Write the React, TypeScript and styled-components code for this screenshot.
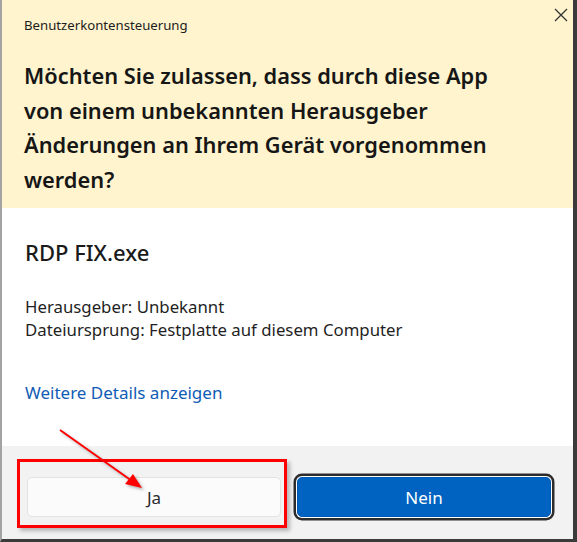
import styled, { createGlobalStyle } from "styled-components";

const GlobalStyle = createGlobalStyle`
  html, body {
    margin: 0;
    padding: 0;
    background: #3a3a3a;
  }
  body {
    font-family: "Noto Sans", "Open Sans", sans-serif;
  }
`;

// Window frame
const Dialog = styled.div`
  position: relative;
  width: 571px;
  height: 539px;
  border-left: 2px solid #a3a3a3;
  border-right: 4px solid #3a3a3a;
  border-bottom: 3px solid #3a3a3a;
  display: flex;
  flex-direction: column;
  overflow: hidden;
`;

const Header = styled.div`
  background: #fff4ce;
  padding: 14px 22px 0 22px;
  height: 194px;
`;

const TitleRow = styled.div`
  display: flex;
  justify-content: space-between;
  align-items: flex-start;
`;

const Title = styled.span`
  font-size: 13.2px;
  line-height: 22px;
  color: #1c1c1c;
`;

const CloseButton = styled.button`
  border: none;
  background: transparent;
  padding: 0;
  margin: -11px -22px 0 0;
  width: 24px;
  height: 24px;
  display: flex;
  align-items: center;
  justify-content: center;
  cursor: pointer;
`;

const Question = styled.h1`
  margin: 23px 0 0 0;
  font-size: 21.8px;
  font-weight: 600;
  line-height: 34.7px;
  color: #161616;
  max-width: 500px;
`;

const Body = styled.div`
  background: #ffffff;
  padding: 30px 23px 0 23px;
  height: 208px;
`;

const AppName = styled.div`
  font-size: 22px;
  line-height: 28px;
  font-weight: 500;
  color: #1a1a1a;
`;

const Details = styled.div`
  margin-top: 29px;
  font-size: 16.8px;
  line-height: 23px;
  color: #1f1f1f;
`;

const MoreLink = styled.a`
  display: block;
  margin-top: 40px;
  font-size: 17px;
  line-height: 23px;
  color: #0f5cb5;
  text-decoration: none;
  cursor: pointer;
`;

const Footer = styled.div`
  flex: 1;
  background: #f2f2f2;
  padding: 31px 22px 0 25px;
  display: flex;
  gap: 16px;
`;

const ActionButton = styled.button<{ $primary?: boolean }>`
  flex: 1;
  height: 40px;
  border-radius: 5px;
  font-family: inherit;
  font-size: 17px;
  cursor: pointer;
  border: 1px solid ${({ $primary }) => ($primary ? "#0059b0" : "#e3e3e3")};
  background: ${({ $primary }) => ($primary ? "#0063c1" : "#fbfbfb")};
  color: ${({ $primary }) => ($primary ? "#ffffff" : "#2a2a2a")};
  box-shadow: ${({ $primary }) =>
    $primary ? "0 0 0 1px #ffffff, 0 0 0 3.5px #2c2c2c" : "none"};
`;

// Red annotation overlay
const Highlight = styled.div`
  position: absolute;
  left: 15px;
  top: 459px;
  width: 264px;
  height: 63px;
  border: 3px solid #ff0000;
  box-shadow: 3px 3px 4px rgba(0, 0, 0, 0.25);
  pointer-events: none;
`;

const Arrow = styled.svg`
  position: absolute;
  left: 50px;
  top: 424px;
  overflow: visible;
  pointer-events: none;
  filter: drop-shadow(2px 2px 1.5px rgba(0, 0, 0, 0.3));
`;

const App = () => {
  return (
    <>
      <GlobalStyle />
      <Dialog>
        <Header>
          <TitleRow>
            <Title>Benutzerkontensteuerung</Title>
            <CloseButton aria-label="Schließen">
              <svg width="14" height="14" viewBox="0 0 14 14">
                <path
                  d="M1 1 L13 13 M13 1 L1 13"
                  stroke="#333"
                  strokeWidth="1.3"
                  fill="none"
                />
              </svg>
            </CloseButton>
          </TitleRow>
          <Question>
            Möchten Sie zulassen, dass durch diese App von einem unbekannten
            Herausgeber Änderungen an Ihrem Gerät vorgenommen werden?
          </Question>
        </Header>
        <Body>
          <AppName>RDP FIX.exe</AppName>
          <Details>
            Herausgeber: Unbekannt
            <br />
            Dateiursprung: Festplatte auf diesem Computer
          </Details>
          <MoreLink>Weitere Details anzeigen</MoreLink>
        </Body>
        <Footer>
          <ActionButton>Ja</ActionButton>
          <ActionButton $primary>Nein</ActionButton>
        </Footer>
        <Highlight />
        <Arrow width="95" height="70" viewBox="0 0 95 70">
          <line x1="8" y1="6" x2="80" y2="57" stroke="#ff0000" strokeWidth="2" />
          <polygon points="90,64 73,60 81,50" fill="#ff0000" />
        </Arrow>
      </Dialog>
    </>
  );
};

export default App;
